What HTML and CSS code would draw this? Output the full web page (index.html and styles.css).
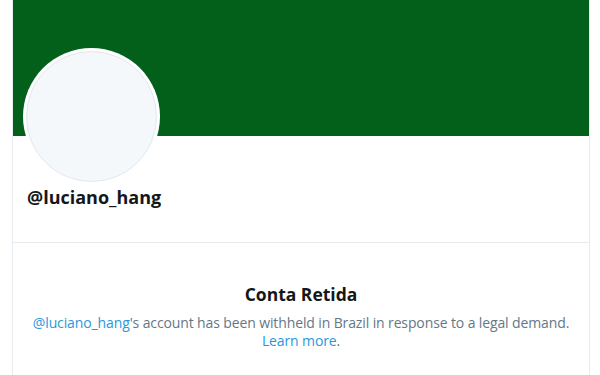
FILE: index.html
```html
<!DOCTYPE html>
<html lang="en">
<head>
<meta charset="utf-8">
<link rel="stylesheet" href="styles.css">
</head>
<body>
<main class="profile">
  <div class="banner"></div>
  <div class="avatar"><div class="avatar-inner"></div></div>
  <section class="header">
    <h1 class="handle">@luciano_hang</h1>
  </section>
  <section class="withheld">
    <h2 class="title">Conta Retida</h2>
    <p class="message"><a class="link" href="#">@luciano_hang</a>'s account has been withheld in Brazil in response to a legal demand.<br><a class="link" href="#">Learn more</a>.</p>
  </section>
</main>
</body>
</html>
```

FILE: styles.css
```css
html, body {
  margin: 0;
  padding: 0;
  background: #ffffff;
}
body {
  font-family: "Open Sans", "Noto Sans", sans-serif;
  height: 375px;
  overflow: hidden;
}
.profile {
  position: relative;
  margin-left: 12px;
  width: 576px;
  min-height: 375px;
  border-left: 1px solid #e6ecf0;
  border-right: 1px solid #e6ecf0;
}
.banner {
  height: 136px;
  background: #03601a;
}
.avatar {
  position: absolute;
  left: 10px;
  top: 48px;
  width: 137px;
  height: 137px;
  box-sizing: border-box;
  border-radius: 50%;
  background: #ffffff;
  padding: 3px;
}
.avatar-inner {
  width: 100%;
  height: 100%;
  box-sizing: border-box;
  border-radius: 50%;
  background: #f5f8fa;
  border: 1px solid #e1e8ed;
}
.header {
  height: 107px;
  box-sizing: border-box;
  padding: 49px 0 0 14px;
  border-bottom: 1px solid #e6ecf0;
}
.handle {
  margin: 0;
  font-size: 18px;
  font-weight: 700;
  line-height: 24px;
  color: #14171a;
}
.withheld {
  padding-top: 39px;
  text-align: center;
}
.title {
  margin: 0 0 8px;
  font-size: 17.5px;
  font-weight: 700;
  line-height: 24px;
  color: #14171a;
}
.message {
  margin: 0;
  padding: 0;
  font-size: 14px;
  letter-spacing: -0.12px;
  line-height: 18px;
  color: #657786;
  white-space: nowrap;
}
.link {
  color: #2a97dc;
  text-decoration: none;
}
```
